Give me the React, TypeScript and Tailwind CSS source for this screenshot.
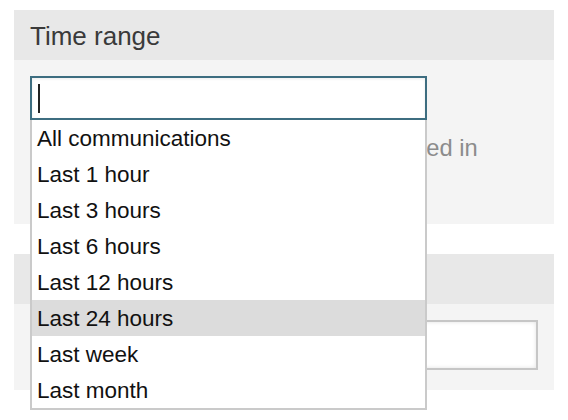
import { FC } from "react";

const options = [
  "All communications",
  "Last 1 hour",
  "Last 3 hours",
  "Last 6 hours",
  "Last 12 hours",
  "Last 24 hours",
  "Last week",
  "Last month",
];

const font = { fontFamily: '"Liberation Sans", Arial, Helvetica, sans-serif' };

const TimeRangePanel: FC = () => {
  return (
    <div className="w-[540px]">
      <div className="h-[50px] bg-[#e8e8e8] px-4 flex items-center">
        <h2 className="text-[26px] text-[#3a3a3a] leading-none pt-[1px]">Time range</h2>
      </div>
      <div className="h-[164px] bg-[#f4f4f4] px-4 pt-4">
        <div className="relative w-[397px]">
          <div className="h-[44px] bg-white border-2 border-[#3d6d80] shadow-[inset_0_1px_3px_rgba(0,0,0,0.08)] flex items-center pl-[6px]">
            <span className="block w-[2px] h-[29px] bg-[#222]" />
          </div>
          <ul className="absolute left-0 top-full z-10 w-full bg-white border-x-2 border-b-2 border-[#cacaca]">
            {options.map((opt) => (
              <li
                key={opt}
                className={`h-[36px] pl-[5px] pt-[1px] text-[22.5px] leading-[36px] text-[#111] ${
                  opt === "Last 24 hours" ? "bg-[#dcdcdc]" : ""
                }`}
              >
                {opt}
              </li>
            ))}
          </ul>
        </div>
        <p className="mt-[10px] text-[23.7px] leading-[36px] text-[#8c8c8c] whitespace-nowrap">
          Show only the communications received in
        </p>
      </div>
    </div>
  );
};

const KeywordPanel: FC = () => {
  return (
    <div className="w-[540px] mt-[30px]">
      <div className="h-[50px] bg-[#e8e8e8] px-4 flex items-center">
        <h2 className="text-[26px] text-[#3a3a3a] leading-none">Keywords</h2>
      </div>
      <div className="h-[86px] bg-[#f4f4f4] px-4 pt-4">
        <div className="h-[50px] bg-white border-2 border-[#c6c6c6] shadow-[inset_0_0_4px_rgba(0,0,0,0.12)]" />
      </div>
    </div>
  );
};

const App: FC = () => {
  return (
    <div className="min-h-[420px] bg-white pt-[10px] pl-[14px]" style={font}>
      <TimeRangePanel />
      <KeywordPanel />
    </div>
  );
};

export default App;
